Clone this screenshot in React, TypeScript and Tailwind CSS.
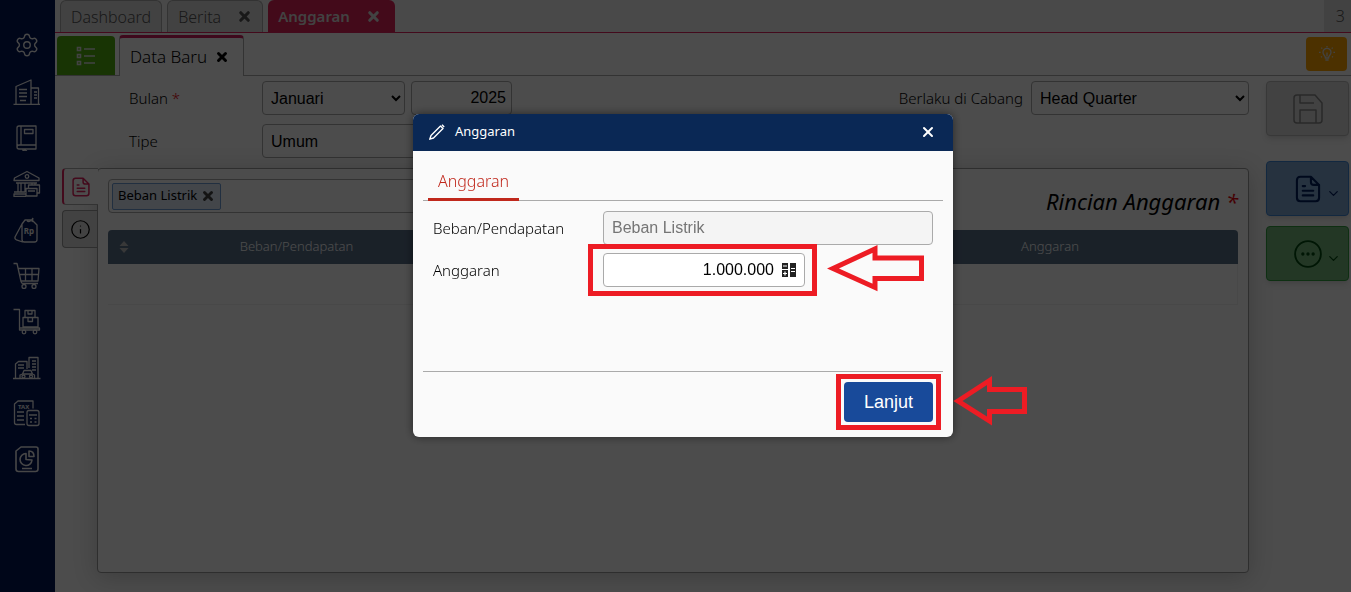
import { useState } from 'react';
import type { ReactNode } from 'react';
import { ChevronDown, Info, Settings, X } from 'lucide-react';

type MenuItem = { label: string; icon: ReactNode };

function Line({ children }: { children: ReactNode }) {
    return (
        <svg viewBox="0 0 28 28" className="size-7" fill="none" stroke="currentColor" strokeWidth="1.3" strokeLinejoin="round">
            {children}
        </svg>
    );
}

const menu: MenuItem[] = [
    { label: 'Pengaturan', icon: <Settings size={26} strokeWidth={1.3} /> },
    {
        label: 'Perusahaan',
        icon: (
            <Line>
                <path d="M.5 27.4h26.5M3 27V9.5L18 3v24M18 11h7.5v16M6 12.5h8M6 16h8M6 19.5h8M7 23.5h6M21 15h3M21 18h3M21 21h3" />
            </Line>
        ),
    },
    {
        label: 'Buku Besar',
        icon: (
            <Line>
                <path d="M6 3h17v19H5.5M6 3Q4 3 4 5v19q0 2 2 2h17v-4M4 24q0-2 2-2M8 3v19M11.5 6.5H20v4h-8.5zM10 26v2l2-1 2 1" />
            </Line>
        ),
    },
    {
        label: 'Kas & Bank',
        icon: (
            <Line>
                <path d="M1 11.5 1.5 9 14 2.5 26 9v2.5zM3 14h21M5 14v9M8 14v9M19 14v2M22 14v2M12 14v9M.5 25h12M1 23h11M13 19.5h11V27H13zM15.5 19v-3h11v8H24M15 22h7M1 25v2.5h12" />
                <circle cx="14" cy="7.5" r="1.8" />
            </Line>
        ),
    },
    {
        label: 'Penjualan',
        icon: (
            <Line>
                <path d="M12 5h7l5 5v14.5q0 2.5-2.5 2.5h-10Q9 27 9 24.5V9zM9.5 8 2 22q-.5 2 1.5 2.8L9.5 27M14 6q3 2 6-3M20 3l-1 4" />
                <text x="10.8" y="19" fontSize="8" fontWeight="700" fill="currentColor" stroke="none">Rp</text>
            </Line>
        ),
    },
    {
        label: 'Pembelian',
        icon: (
            <Line>
                <path d="M.5 2.5H4l4 18q.5 2 2 2h15M5 7.5h21L25 20H8M6.5 13.5h19M12.5 7.5V20M19 7.5V20" />
                <circle cx="11" cy="25.5" r="2" />
                <circle cx="21" cy="25.5" r="2" />
            </Line>
        ),
    },
    {
        label: 'Persediaan',
        icon: (
            <Line>
                <path d="M.5 2.5h6V23h20v-2h-20M12 3.5h10v7H12zM15 3.5V7h4V3.5M10 10.5h15V20H10zM15 10.5v4h4.5v-4" />
                <circle cx="11" cy="25" r="1.8" />
                <circle cx="22" cy="25" r="1.8" />
            </Line>
        ),
    },
    {
        label: 'Aset Tetap',
        icon: (
            <Line>
                <path d="M0 25.5h27.5M2.5 25V11l3-2.5H14V16M16 15V4.5h9V25M5 12h6M5 15h6M19 8h4M19 11h4M19 14h4M19 17h4M7 25v-3l2.5-1 1.5-3.5h7l1.5 3.5 2 1v3M9 21h11" />
                <circle cx="10.5" cy="23.5" r="1.5" />
                <circle cx="18" cy="23.5" r="1.5" />
            </Line>
        ),
    },
    {
        label: 'Perpajakan',
        icon: (
            <Line>
                <path d="M20 9.5V2H5L1.5 5v18.5q0 2 2 2H12M4 13h7M4 17h7M4 21h7" />
                <rect x="14" y="11.5" width="12" height="15" rx="2" />
                <path d="M16 16h8M17 19.5h2M21.5 19.5h2M17 23h2M21.5 23h2" />
                <text x="5" y="10" fontSize="6" fontWeight="700" fill="currentColor" stroke="none">TAX</text>
            </Line>
        ),
    },
    {
        label: 'Laporan',
        icon: (
            <Line>
                <path strokeWidth="1.6" d="M8 2h15q2 0 2 2v20q0 2.5-2.5 2.5h-17Q3 26.5 3 24V6z" />
                <path strokeWidth="1.6" d="M13 8.5A6 6 0 1 0 19 15l-6-.5zM16 6q5 0 5 5.5h-5zM9 23.5h10" />
            </Line>
        ),
    },
];

function DocIcon({ className }: { className: string }) {
    return (
        <svg viewBox="0 0 24 24" className={className} fill="none" stroke="currentColor" strokeWidth="1.8" strokeLinejoin="round" strokeLinecap="round">
            <path d="M14.5 1.5h-9q-3 0-3 3v15q0 3 3 3h13q3 0 3-3v-11zM14.5 1.5V6q0 2.5 2.5 2.5h4.5M7.5 9.5h2M7.5 13.5h9M7.5 17.5h9" />
        </svg>
    );
}

const field = 'h-[34px] rounded border border-[#aaa] px-2 font-[Liberation_Sans,Arial,sans-serif] text-base font-normal';

function Sidebar() {
    return (
        <nav className="flex w-[55px] shrink-0 flex-col items-center bg-[#001456] pt-[22px] pr-px text-[#eee]">
            {menu.map((item) => (
                <button key={item.label} type="button" aria-label={item.label} className="flex h-[46px] w-full items-center justify-center">
                    {item.icon}
                </button>
            ))}
        </nav>
    );
}

function TopTabs() {
    return (
        <div className="flex h-[33px] items-stretch gap-[5px] border-b border-[#e0245e] bg-[#f5f5f5] pl-[5px] text-base text-[#555]">
            <button type="button" className="rounded-t-md border border-b-0 border-[#aaa] bg-[#dedede] px-2.5">Dashboard</button>
            <div className="flex items-center gap-4 rounded-t-md border border-b-0 border-[#aaa] bg-[#dedede] px-2.5">
                <button type="button">Berita</button>
                <button type="button" aria-label="Tutup Berita"><X size={15} strokeWidth={5} /></button>
            </div>
            <div className="flex items-center gap-4 rounded-t-md bg-[#e02458] px-2.5 text-[15px] font-semibold text-[#ddd]">
                <button type="button">Anggaran</button>
                <button type="button" aria-label="Tutup Anggaran" className="pr-1"><X size={15} strokeWidth={5} /></button>
            </div>
            <div className="ml-auto flex w-[27px] items-center justify-end bg-[#dedede] pr-1.5">3</div>
        </div>
    );
}

function SubTabs() {
    return (
        <div className="flex h-[43px] items-end border-b border-[#aaa] bg-[#fdfdfd] pr-1 pl-0.5">
            <button type="button" aria-label="Daftar" className="flex h-[39px] w-[58px] items-center justify-center rounded-t bg-[#50b010] text-[#ddd]">
                <svg viewBox="0 0 20 20" className="size-5" fill="none" stroke="currentColor" strokeWidth="1.6">
                    <path d="M1.5 1.5h3v3h-3zM1.5 8.5h3v3h-3zM1.5 15.5h3v3h-3zM8 3h11M8 10h11M8 17h11" />
                </svg>
            </button>
            <div className="-mb-px ml-1 flex h-[41px] items-center gap-2 rounded-t border border-t-3 border-b-0 border-[#aaa] border-t-[#d02060] bg-[#fdfdfd] px-2.5 text-[17px]">
                <button type="button">Data Baru</button>
                <button type="button" aria-label="Tutup Data Baru" className="pr-1"><X size={14} strokeWidth={5} /></button>
            </div>
            <button type="button" aria-label="Petunjuk" className="mb-1 ml-auto flex h-[34px] w-[41px] items-center justify-center rounded bg-[#ffa500] text-[#ddd]">
                <svg viewBox="0 0 20 20" className="size-4" fill="none" stroke="currentColor" strokeWidth="1.6">
                    <path d="M8 15q0-2-1.5-3.5a5 5 0 1 1 7 0Q12 13 12 15zM8 17.5h4M10 8v5M10 0v1.5M3 2l1 1.2M17 2l-1 1.2M0 8h2M18 8h2M2.5 14l1.2-1M17.5 14l-1.2-1" />
                </svg>
            </button>
        </div>
    );
}

function BudgetForm() {
    return (
        <div className="flex flex-col gap-[9px] pl-[67px]">
            <div className="flex items-center">
                <label htmlFor="bulan" className="w-[133px]">
                    Bulan <span className="text-red-600">*</span>
                </label>
                <select id="bulan" className={`${field} w-[143px] bg-white pl-1`}>
                    <option>Januari</option>
                </select>
                <input aria-label="Tahun" defaultValue="2025" className={`${field} ml-1.5 w-[101px] bg-white pr-[5px] text-right`} />
                <label htmlFor="cabang" className="mr-2 ml-auto">Berlaku di Cabang</label>
                <select id="cabang" className={`${field} w-[218px] bg-white pl-1`}>
                    <option>Head Quarter</option>
                </select>
            </div>
            <div className="flex items-center">
                <label htmlFor="tipe" className="w-[133px]">Tipe</label>
                <select id="tipe" className={`${field} w-[250px] bg-white pl-1`}>
                    <option>Umum</option>
                </select>
            </div>
        </div>
    );
}

function DetailPanel() {
    return (
        <div className="mt-2.5 flex grow">
            <div className="z-10 flex w-[35px] shrink-0 flex-col gap-[5px]">
                <button type="button" aria-label="Rincian" className="-mr-px flex h-[37px] items-center justify-center rounded-l border border-r-0 border-l-2 border-[#aaa] border-l-[#e0245e] bg-[#fdfdfd] text-[#e0245e]">
                    <DocIcon className="size-5" />
                </button>
                <button type="button" aria-label="Informasi" className="flex h-[38px] items-center justify-center rounded-l border border-r-0 border-[#999] bg-[#dedede]">
                    <Info size={21} strokeWidth={1.4} />
                </button>
            </div>
            <section className="grow rounded border border-[#999] bg-[#fdfdfd] px-[10px] pt-2.5 shadow-[0_4px_24px_rgba(0,0,0,0.2)]">
                <div className="flex h-[51px] items-start justify-between">
                    <div className="flex h-[34px] w-[500px] items-center rounded border border-[#aaa] px-[3px]">
                        <span className="flex h-[27px] items-center gap-1 rounded-xs border border-[#6f9fd8] bg-[#dfeaf8] px-[5px] text-[13px] font-normal">
                            Beban Listrik
                            <button type="button" aria-label="Hapus Beban Listrik" className="text-[#444]"><X size={14} strokeWidth={5} /></button>
                        </span>
                    </div>
                    <h2 className="pt-1.5 text-[22px] font-normal italic">
                        Rincian Anggaran <span className="text-red-600">*</span>
                    </h2>
                </div>
                <table className="w-full table-fixed border-separate border-spacing-0 text-[13px]">
                    <thead>
                        <tr className="h-[34px] text-white">
                            <th className="w-[31px] rounded-tl bg-[#586f88]">
                                <svg viewBox="0 0 10 12" className="mx-auto h-3 w-2.5" fill="#bbb">
                                    <path d="M5 0 9.5 5h-9zM5 12 .5 7h9z" />
                                </svg>
                            </th>
                            <th className="w-[315px] bg-[#586f88] font-light">Beban/Pendapatan</th>
                            <th className="bg-[#586f88]" />
                            <th className="w-[376px] rounded-tr bg-[#586f88] font-light">Anggaran</th>
                        </tr>
                    </thead>
                    <tbody>
                        <tr className="h-[41px]">
                            <td colSpan={4} className="border-r border-b border-[#f0f0f0]" />
                        </tr>
                    </tbody>
                </table>
            </section>
        </div>
    );
}

function ActionBar() {
    return (
        <div className="flex w-[83px] shrink-0 flex-col">
            <button type="button" aria-label="Simpan" className="flex h-[55px] items-center justify-center rounded border border-[#bbb] bg-[#dedede] text-[#888] shadow-md">
                <svg viewBox="0 0 30 30" className="size-[30px]" fill="none" stroke="currentColor" strokeWidth="1.5" strokeLinejoin="round">
                    <path d="M4 1h18l7 8v17q0 3-3 3H4q-3 0-3-3V4q0-3 3-3zM7 1v8h14M7 29V16h16v13" />
                </svg>
            </button>
            <button type="button" aria-label="Dokumen" className="mt-[25px] flex h-[55px] items-center justify-end gap-1 rounded border border-[#3f87d8] bg-[#80a8d4] pr-[7px] text-[#002060] shadow-md">
                <DocIcon className="h-[30px] w-7" />
                <ChevronDown size={15} strokeWidth={2} className="mt-2.5" />
            </button>
            <button type="button" aria-label="Lainnya" className="mt-2.5 flex h-[55px] items-center justify-end gap-1 rounded border border-[#2f9f3f] bg-[#76b87e] pr-[7px] text-[#004a10] shadow-md">
                <svg viewBox="0 0 30 30" className="size-7" fill="currentColor">
                    <circle cx="15" cy="15" r="13.8" fill="none" stroke="currentColor" strokeWidth="2" />
                    <circle cx="9.5" cy="15" r="1.8" />
                    <circle cx="15" cy="15" r="1.8" />
                    <circle cx="20.5" cy="15" r="1.8" />
                </svg>
                <ChevronDown size={15} strokeWidth={2} className="mt-2.5" />
            </button>
        </div>
    );
}

function BudgetDialog({ onClose }: { onClose: () => void }) {
    return (
        <div className="fixed inset-0 z-20 flex items-start justify-center bg-black/70 pt-[114px] pl-[15px]">
            <div role="dialog" aria-label="Anggaran" className="w-full max-w-[540px] rounded-md bg-[#fafafa] shadow-[0_0_10px_rgba(0,0,0,0.5)]">
                <header className="flex h-[37px] items-center rounded-t-md bg-[#0a2855] pr-[17px] pb-0.5 pl-4 text-[13px] font-normal text-white">
                    <svg viewBox="0 0 16 16" className="size-4" fill="none" stroke="currentColor" strokeWidth="1.4" strokeLinejoin="round">
                        <path d="M.8 15.2 2 11.5 11.5 2 14 4.5 4.5 14zM13 .8 15.2 3" />
                    </svg>
                    <span className="ml-2.5">Anggaran</span>
                    <button type="button" aria-label="Tutup" className="ml-auto" onClick={onClose}><X size={16} strokeWidth={3} /></button>
                </header>
                <div className="px-2.5 pt-3.5">
                    <div className="flex border-b border-[#aaa] pl-[5px]">
                        <button type="button" className="-mb-px h-9 border-b-3 border-[#c0281c] px-2.5 pb-0.5 text-base text-[#c0281c]">Anggaran</button>
                    </div>
                    <form className="flex h-[171px] flex-col gap-2 border-b border-[#aaa] px-2.5 pt-2.5">
                        <div className="flex items-center">
                            <label htmlFor="akun" className="w-[170px]">Beban/Pendapatan</label>
                            <input id="akun" disabled value="Beban Listrik" className={`${field} grow bg-[#f4f4f4] text-[#757575]`} />
                        </div>
                        <div className="flex items-center">
                            <label htmlFor="nilai" className="w-[170px]">Anggaran</label>
                            <div className="relative">
                                <div className={`${field} flex w-[202px] items-center gap-2 bg-white`}>
                                    <input id="nilai" defaultValue="1.000.000" className="w-0 grow text-right outline-none" />
                                    <button type="button" aria-label="Kalkulator">
                                        <svg viewBox="0 0 14 14" className="size-3.5">
                                            <path fill="#222" d="M0 0h6v6H0zM0 7h6v7H0zM8 0h6v14H8z" />
                                            <path stroke="#fff" strokeWidth="1.2" d="M1 3h4M1 10.5h4M3 8.5v4M9 5.5h4M9 8.5h4" />
                                        </svg>
                                    </button>
                                </div>
                                <span className="pointer-events-none absolute -inset-y-[9px] -right-3 -left-[15px] border-5 border-[#ed1c24]" />
                                <svg viewBox="0 0 98 48" className="pointer-events-none absolute -top-2 left-[224px] h-12 w-[98px]" fill="none" stroke="#ed1c24" strokeWidth="5">
                                    <path d="M6 23.5 48 4v9h46.5v20.5H48v9z" />
                                </svg>
                            </div>
                        </div>
                    </form>
                </div>
                <footer className="flex h-[65px] items-start justify-end px-5 pt-2.5">
                    <div className="relative">
                        <button type="button" className="h-10 w-[89px] rounded bg-[#184a9a] font-[Liberation_Sans,Arial,sans-serif] text-lg font-normal text-white">Lanjut</button>
                        <span className="pointer-events-none absolute -inset-2 border-5 border-[#ed1c24]" />
                        <svg viewBox="0 0 76 52" className="pointer-events-none absolute -top-2 left-[109px] h-[52px] w-[76px]" fill="none" stroke="#ed1c24" strokeWidth="5">
                            <path d="M5 27 36.5 6.5v9h35v22h-35V47z" />
                        </svg>
                    </div>
                </footer>
            </div>
        </div>
    );
}

export default function App() {
    const [open, setOpen] = useState<boolean>(true);

    return (
        <div className="flex min-h-screen bg-[#fdfdfd] font-['Noto_Sans',sans-serif] text-[15px] font-light text-black">
            <Sidebar />
            <div className="flex min-w-0 grow flex-col">
                <TopTabs />
                <SubTabs />
                <div className="flex grow gap-[17px] pt-[5px] pr-0.5 pb-[19px] pl-[7px]">
                    <main className="flex min-w-0 grow flex-col">
                        <BudgetForm />
                        <DetailPanel />
                    </main>
                    <ActionBar />
                </div>
            </div>
            {open && <BudgetDialog onClose={() => setOpen(false)} />}
        </div>
    );
}
